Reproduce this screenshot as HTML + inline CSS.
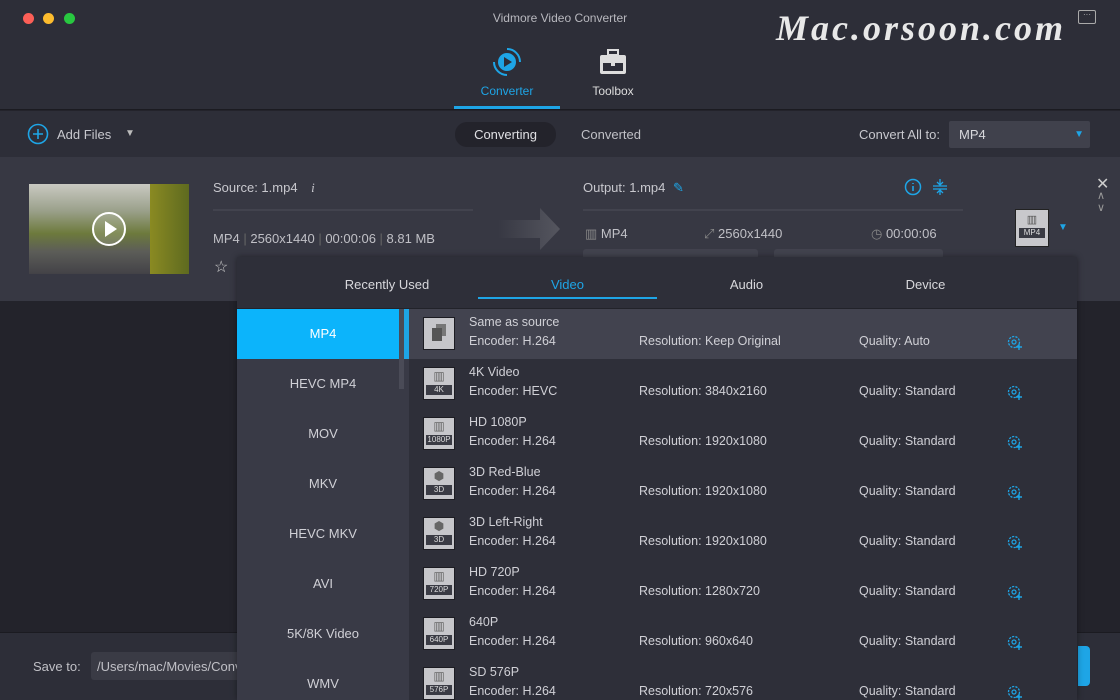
<!DOCTYPE html>
<html><head><meta charset="utf-8"><style>
*{margin:0;padding:0;box-sizing:border-box}
html,body{width:1120px;height:700px;overflow:hidden}
body{background:#23232b;font-family:"Liberation Sans",sans-serif;color:#d0d0d6;position:relative;font-size:13px}
.a{position:absolute}
.blue{color:#1ea5e6}
</style></head><body>
<!-- header -->
<div class="a" style="left:0;top:0;width:1120px;height:110px;background:#2d2e38;border-bottom:1px solid #1b1b21"></div>
<div class="a" style="left:23px;top:13px;width:11px;height:11px;border-radius:50%;background:#fc5f57"></div>
<div class="a" style="left:43px;top:13px;width:11px;height:11px;border-radius:50%;background:#fdbc2e"></div>
<div class="a" style="left:64px;top:13px;width:11px;height:11px;border-radius:50%;background:#28c840"></div>
<div class="a" style="left:0;width:1120px;top:11px;text-align:center;font-size:12px;color:#b8b8be">Vidmore Video Converter</div>
<div class="a" style="left:776px;top:7px;font-family:'Liberation Serif',serif;font-style:italic;font-weight:bold;font-size:36px;color:#e8e8e8;letter-spacing:3px">Mac.orsoon.com</div>
<div class="a" style="left:1078px;top:10px;width:18px;height:14px;border:1.5px solid #aaa;border-radius:2px;font-size:8px;line-height:8px;text-align:center;color:#bbb">···</div>
<svg class="a" style="left:491px;top:46px" width="32" height="32" viewBox="0 0 32 32"><circle cx="16" cy="16" r="9" fill="#1ea5e6"/><path d="M13 11 L21 16 L13 21Z" fill="#2d2e38"/><path d="M16 3 A13 13 0 0 1 29 16 M16 29 A13 13 0 0 1 3 16" stroke="#1ea5e6" stroke-width="2" fill="none"/></svg>
<div class="a blue" style="left:455px;width:104px;top:84px;text-align:center;font-size:12px">Converter</div>
<div class="a" style="left:454px;top:106px;width:106px;height:3px;background:#1ea5e6"></div>
<svg class="a" style="left:598px;top:48px" width="30" height="28" viewBox="0 0 30 28"><rect x="10" y="2" width="10" height="5" fill="none" stroke="#ddd" stroke-width="2"/><rect x="2" y="7" width="26" height="19" rx="2" fill="#ddd"/><rect x="5" y="15" width="20" height="8" fill="#2d2e38"/><rect x="13" y="12" width="4" height="6" fill="#ddd"/></svg>
<div class="a" style="left:580px;width:66px;top:84px;text-align:center;font-size:12px;color:#ddd">Toolbox</div>
<!-- toolbar -->
<div class="a" style="left:0;top:111px;width:1120px;height:46px;background:#2d2e38"></div>
<svg class="a" style="left:27px;top:123px" width="22" height="22"><circle cx="11" cy="11" r="9.5" stroke="#1ea5e6" stroke-width="1.6" fill="none"/><path d="M11 6v10M6 11h10" stroke="#1ea5e6" stroke-width="1.6"/></svg>
<div class="a" style="left:57px;top:127px;color:#c8c8ce">Add Files</div>
<div class="a" style="left:125px;top:128px;font-size:10px;color:#bbb">▼</div>
<div class="a" style="left:455px;top:122px;width:101px;height:25px;border-radius:12px;background:#23232b;text-align:center;line-height:25px;color:#e0e0e4">Converting</div>
<div class="a" style="left:581px;top:127px;color:#c0c0c6">Converted</div>
<div class="a" style="left:859px;top:127px;color:#c8c8ce">Convert All to:</div>
<div class="a" style="left:949px;top:121px;width:141px;height:27px;background:#40414c;border-radius:2px;padding:6px 10px;color:#d8d8dc">MP4<span style="position:absolute;right:6px;top:8px;color:#1ea5e6;font-size:10px">▼</span></div>
<!-- file row -->
<div class="a" style="left:0;top:157px;width:1120px;height:144px;background:#373843"></div>
<div class="a" style="left:29px;top:184px;width:160px;height:90px;background:linear-gradient(180deg,#c9c9c2 0%,#9aa08a 30%,#6d7a3c 55%,#5c5d58 75%,#434247 100%)"></div>
<div class="a" style="left:150px;top:184px;width:39px;height:90px;background:linear-gradient(90deg,#8a8a22,#5e6a20)"></div>
<svg class="a" style="left:91px;top:211px" width="36" height="36"><circle cx="18" cy="18" r="16" stroke="#fff" stroke-width="2" fill="rgba(255,255,255,.15)"/><path d="M14 10 L26 18 L14 26Z" fill="#fff"/></svg>
<div class="a" style="left:213px;top:180px;color:#c8c8ce">Source: 1.mp4 <i style="margin-left:10px;font-family:'Liberation Serif',serif">i</i></div>
<div class="a" style="left:213px;top:209px;width:260px;height:2px;background:#42434e"></div>
<div class="a" style="left:213px;top:231px;color:#c0c0c6">MP4 <span style="color:#666">|</span> 2560x1440 <span style="color:#666">|</span> 00:00:06 <span style="color:#666">|</span> 8.81 MB</div>
<div class="a" style="left:214px;top:257px;color:#ccc;font-size:16px">☆</div>
<svg class="a" style="left:498px;top:208px" width="62" height="42"><defs><linearGradient id="g"><stop offset="0" stop-color="#373843"/><stop offset="1" stop-color="#55565f"/></linearGradient></defs><path d="M0 12h42V0l20 21-20 21V30H0z" fill="url(#g)"/></svg>
<div class="a" style="left:583px;top:180px;color:#c8c8ce">Output: 1.mp4 <span class="blue" style="margin-left:4px">✎</span></div>
<svg class="a" style="left:904px;top:178px" width="18" height="18"><circle cx="9" cy="9" r="7.5" stroke="#1ea5e6" stroke-width="1.5" fill="none"/><path d="M9 8v5M9 5v1" stroke="#1ea5e6" stroke-width="1.6"/></svg>
<svg class="a" style="left:931px;top:178px" width="18" height="18"><path d="M2 8h14M2 11h14M9 1v5M9 17v-5M6 4l3 3 3-3M6 15l3-3 3 3" stroke="#1ea5e6" stroke-width="1.3" fill="none"/></svg>
<div class="a" style="left:583px;top:209px;width:380px;height:2px;background:#42434e"></div>
<div class="a" style="left:585px;top:226px;color:#c0c0c6"><span style="color:#888">▥</span> MP4</div>
<div class="a" style="left:704px;top:226px;color:#c0c0c6"><span style="color:#888">⤢</span> 2560x1440</div>
<div class="a" style="left:871px;top:226px;color:#c0c0c6"><span style="color:#888">◷</span> 00:00:06</div>
<div class="a" style="left:583px;top:249px;width:175px;height:10px;background:#42434e;border-radius:3px"></div>
<div class="a" style="left:774px;top:249px;width:169px;height:10px;background:#42434e;border-radius:3px"></div>
<div class="a" style="left:1015px;top:209px;width:34px;height:38px;background:#c8c8cc;border:1px solid #222;padding-top:3px;text-align:center;font-size:11px;color:#555">▥<div style="background:#3a3b44;color:#ddd;font-size:8px;margin:2px 3px 0;line-height:10px">MP4</div></div>
<div class="a blue" style="left:1058px;top:222px;font-size:10px">▼</div>
<div class="a" style="left:1096px;top:174px;color:#ccc;font-size:16px">✕</div>
<div class="a" style="left:1097px;top:190px;color:#999;font-size:11px;line-height:12px">∧<br>∨</div>
<!-- bottom bar -->
<div class="a" style="left:0;top:632px;width:1120px;height:68px;background:#2d2e38;border-top:1px solid #1b1b21"></div>
<div class="a" style="left:33px;top:659px;color:#c0c0c6">Save to:</div>
<div class="a" style="left:91px;top:652px;width:160px;height:28px;background:#3a3b45;border-radius:3px;padding:7px 6px;color:#c0c0c6;overflow:hidden;white-space:nowrap">/Users/mac/Movies/Converter</div>
<div class="a" style="left:1078px;top:646px;width:12px;height:40px;background:#1ea5e6;border-radius:0 4px 4px 0"></div>
<!-- dropdown -->
<div class="a" style="left:237px;top:257px;width:840px;height:443px;background:#2e2f39;box-shadow:0 0 6px rgba(0,0,0,.4)"></div>
<div class="a" style="left:237px;top:277px;width:300px;text-align:center;color:#d8d8dc">Recently Used</div>
<div class="a blue" style="left:478px;top:277px;width:179px;text-align:center">Video</div>
<div class="a" style="left:478px;top:297px;width:179px;height:2px;background:#1ea5e6"></div>
<div class="a" style="left:657px;top:277px;width:179px;text-align:center;color:#d8d8dc">Audio</div>
<div class="a" style="left:836px;top:277px;width:179px;text-align:center;color:#d8d8dc">Device</div>
<div class="a" style="left:237px;top:308px;width:840px;height:1px;background:#22232a"></div>
<div class="a" style="left:237px;top:309px;width:172px;height:391px;background:#393a46"></div>
<div class="a" style="left:237px;top:309px;width:163px;height:50px;background:#0cb4fb"></div>
<div class="a" style="left:399px;top:309px;width:5px;height:80px;background:#4a4b57"></div>
<div class="a" style="left:404px;top:309px;width:5px;height:50px;background:#1ea5e6"></div>
<div class="a" style="left:409px;top:309px;width:668px;height:50px;background:#42434f"></div>
<div class="a" style="left:237px;top:309px;width:172px">
<div style="height:50px;line-height:50px;text-align:center;width:172px;color:#fff">MP4</div>
<div style="height:50px;line-height:50px;text-align:center;width:172px">HEVC MP4</div>
<div style="height:50px;line-height:50px;text-align:center;width:172px">MOV</div>
<div style="height:50px;line-height:50px;text-align:center;width:172px">MKV</div>
<div style="height:50px;line-height:50px;text-align:center;width:172px">HEVC MKV</div>
<div style="height:50px;line-height:50px;text-align:center;width:172px">AVI</div>
<div style="height:50px;line-height:50px;text-align:center;width:172px">5K/8K Video</div>
<div style="height:50px;line-height:50px;text-align:center;width:172px">WMV</div>
</div>
<div class="a" style="left:409px;top:309px;width:668px;font-size:12.5px;color:#d0d0d6" id="rows"></div>
<script>
var r=[["Same as source","H.264","Keep Original","Auto",""],["4K Video","HEVC","3840x2160","Standard","4K"],["HD 1080P","H.264","1920x1080","Standard","1080P"],["3D Red-Blue","H.264","1920x1080","Standard","3D"],["3D Left-Right","H.264","1920x1080","Standard","3D"],["HD 720P","H.264","1280x720","Standard","720P"],["640P","H.264","960x640","Standard","640P"],["SD 576P","H.264","720x576","Standard","576P"]];
var h="";r.forEach(function(x,i){
var ic=x[4]?'<div style="position:absolute;left:14px;top:8px;width:32px;height:33px;background:#c6c6ca;border:1px solid #1c1c22;text-align:center;font-size:12px;color:#666;line-height:16px">'+(x[4]=="3D"?"⬢":"▥")+'<div style="background:#3a3b44;color:#ddd;font-size:8px;line-height:10px;margin:1px 2px 0">'+x[4]+'</div></div>':'<div style="position:absolute;left:14px;top:8px;width:32px;height:33px;background:#c6c6ca;border:1px solid #1c1c22"><div style="position:absolute;left:12px;top:6px;width:10px;height:12px;background:#777"></div><div style="position:absolute;left:8px;top:10px;width:10px;height:13px;background:#555"></div></div>';
h+='<div style="position:relative;height:50px">'+ic+'<div style="position:absolute;left:60px;top:6px">'+x[0]+'</div><div style="position:absolute;left:60px;top:25px">Encoder: '+x[1]+'</div><div style="position:absolute;left:230px;top:25px">Resolution: '+x[2]+'</div><div style="position:absolute;left:450px;top:25px">Quality: '+x[3]+'</div><svg style="position:absolute;left:597px;top:25px" width="18" height="18" viewBox="0 0 18 18"><circle cx="8" cy="8" r="5.5" stroke="#1ea5e6" stroke-width="1.3" fill="none" stroke-dasharray="2.2 1.2"/><circle cx="8" cy="8" r="2" stroke="#1ea5e6" stroke-width="1.2" fill="none"/><path d="M13 10v6M10 13h6" stroke="#1ea5e6" stroke-width="1.4"/></svg></div>';});
document.getElementById("rows").innerHTML=h;
</script>
</body></html>
